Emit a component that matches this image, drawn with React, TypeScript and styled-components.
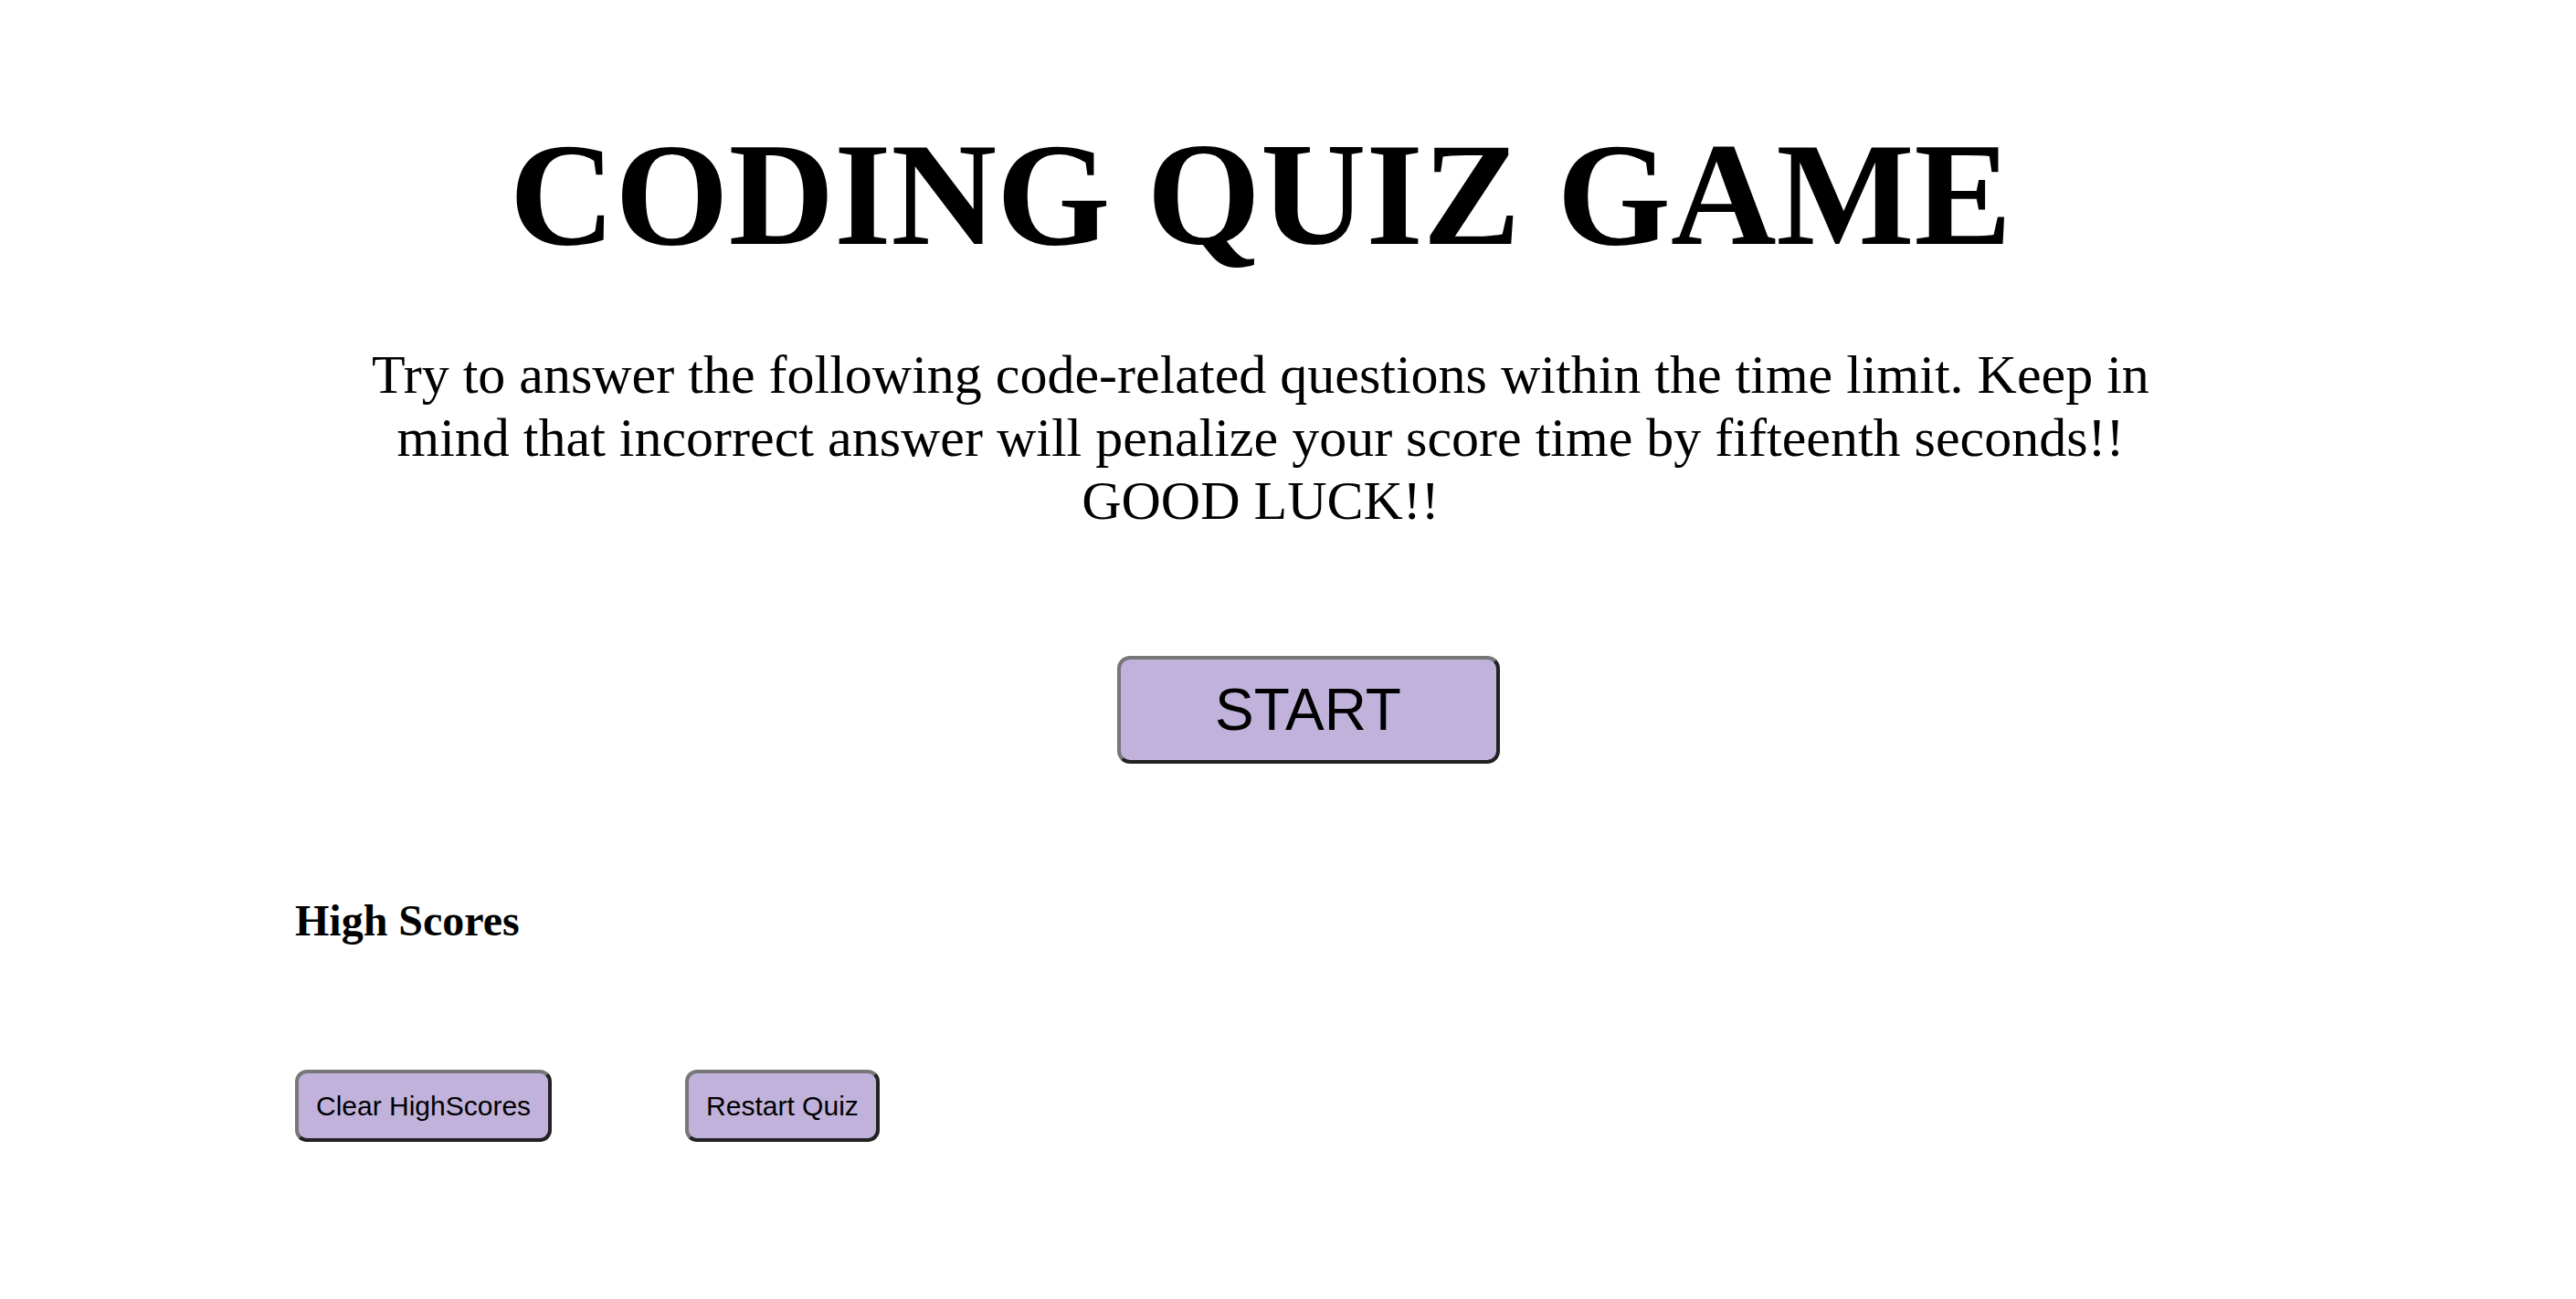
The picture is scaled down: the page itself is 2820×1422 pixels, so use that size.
import React from "react";
import styled, { createGlobalStyle } from "styled-components";

const GlobalStyle = createGlobalStyle`
  html, body {
    margin: 0;
    padding: 0;
    background: #ffffff;
  }
  body {
    font-family: "Liberation Serif", "Times New Roman", serif;
    color: #000000;
  }
`;

const Page = styled.main`
  display: flex;
  flex-direction: column;
  padding: 121px 60px 120px 0;
  min-height: 1422px;
  box-sizing: border-box;
`;

const Title = styled.h1`
  margin: 0;
  text-align: center;
  font-family: "Liberation Serif", "Times New Roman", serif;
  font-weight: 700;
  font-size: 160px;
  line-height: normal;
`;

const Intro = styled.p`
  margin: 70px auto 0;
  width: 2000px;
  text-align: center;
  font-family: "Liberation Serif", "Times New Roman", serif;
  font-size: 60px;
  line-height: normal;
`;

const StartRow = styled.div`
  display: flex;
  justify-content: center;
  margin-top: 135px;
`;

const PurpleButton = styled.button<{ $size: "large" | "small" }>`
  box-sizing: border-box;
  background: #c1b2dc;
  color: #000000;
  font-family: "Liberation Sans", Arial, sans-serif;
  line-height: normal;
  border-style: solid;
  border-width: 4px;
  border-color: #777777 #222222 #222222 #777777;
  cursor: pointer;
  font-size: ${(p) => (p.$size === "large" ? "64px" : "30px")};
  border-radius: ${(p) => (p.$size === "large" ? "14px" : "13px")};
  padding: ${(p) => (p.$size === "large" ? "18px 0" : "18px 19px")};
  width: ${(p) => (p.$size === "large" ? "419px" : "auto")};
  height: ${(p) => (p.$size === "large" ? "118px" : "79px")};
`;

const StartButton = styled(PurpleButton)`
  margin-left: 104px;
`;

const ScoresSection = styled.section`
  display: flex;
  flex-direction: column;
  align-items: flex-start;
  padding-left: 323px;
  margin-top: 144px;
`;

const ScoresHeading = styled.h2`
  margin: 0;
  font-family: "Liberation Serif", "Times New Roman", serif;
  font-weight: 700;
  font-size: 48px;
  line-height: normal;
`;

const ScoreList = styled.ol`
  margin: 0;
  padding: 0;
  list-style: none;
`;

const ButtonRow = styled.div`
  display: flex;
  gap: 146px;
  margin-top: 136px;
`;

export default function App() {
  return (
    <>
      <GlobalStyle />
      <Page>
        <Title>CODING QUIZ GAME</Title>
        <Intro>
          Try to answer the following code-related questions within the time
          limit. Keep in mind that incorrect answer will penalize your score
          time by fifteenth seconds!! GOOD LUCK!!
        </Intro>
        <StartRow>
          <StartButton $size="large">START</StartButton>
        </StartRow>
        <ScoresSection>
          <ScoresHeading>High Scores</ScoresHeading>
          <ScoreList />
          <ButtonRow>
            <PurpleButton $size="small">Clear HighScores</PurpleButton>
            <PurpleButton $size="small">Restart Quiz</PurpleButton>
          </ButtonRow>
        </ScoresSection>
      </Page>
    </>
  );
}
